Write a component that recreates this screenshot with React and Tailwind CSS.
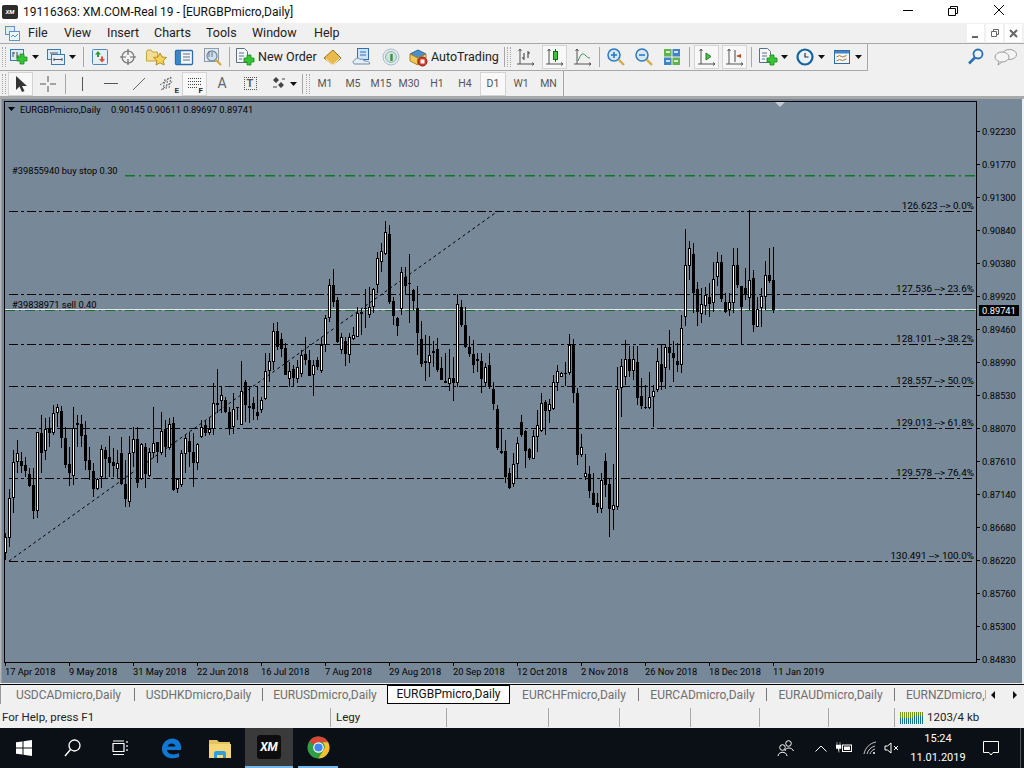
const uiFont = { fontFamily: 'Roboto, "Noto Sans", sans-serif' };

// candles read off the chart: [high, bodyTop, bodyBottom, low, white], offset is the crop origin
const segA = [
  [700,712,760,780,1],[568,595,715,740,1],[450,485,595,640,1],[420,460,485,520,1],[455,484,497,520,0],[470,495,512,530,0],
  [505,522,558,560,0],[505,555,632,658,0],[395,396,632,655,1],[345,400,458,520,0],[355,388,452,480,1],[350,388,398,440,0],
  [315,340,398,405,1],[312,322,338,380,1],[318,333,415,445,0],[380,414,495,505,0],[440,492,520,558,0],[322,383,528,555,1],
  [345,370,374,440,0],[345,372,408,440,0],[362,405,483,510,0],[440,480,510,540,0],[490,513,566,590,0],[535,536,568,570,1],
  [435,448,530,565,1],[440,450,478,535,0],[408,472,488,530,0],[445,487,497,530,0],[450,488,506,535,1],[412,460,552,555,0],
  [480,552,598,622,0],[408,460,606,622,1],[380,418,460,500,1],[380,418,548,565,0],[430,433,537,540,1],[430,442,522,565,0],
  [445,455,527,530,1],[322,428,458,475,1],[425,427,455,490,0],[335,392,460,465,1],[360,388,442,470,0],[355,372,445,450,1],
  [350,370,570,572,0],[535,538,568,578,1],[450,458,556,560,1],[405,413,462,520,1],[395,423,455,500,0],[400,456,490,562,0],
  [430,432,490,510,1],[360,382,410,415,1],[360,376,398,408,0],[350,388,400,405,1],[250,308,388,405,1],[208,308,314,340,1],
  [260,286,302,340,1],[290,300,335,340,0],[320,336,388,405,0],[278,328,382,402,1],[320,320,323,360,0],[183,274,375,375,1],
  [240,246,314,365,0],[260,318,324,370,0],[290,310,326,360,0],[258,335,348,360,0],
];
const segB = [
  [590,600,630,640,1],[458,512,598,600,1],[460,484,512,545,1],[370,394,485,510,1],[365,393,440,450,0],[400,418,446,470,0],
  [430,445,525,525,0],[485,512,538,560,1],[495,508,534,562,0],[480,500,538,550,1],[450,465,522,530,1],[412,462,480,495,0],
  [450,480,527,527,0],[480,494,525,588,1],[470,480,500,510,0],[410,436,512,518,1],[345,355,436,455,1],[238,254,355,365,1],
  [208,255,305,320,0],[292,300,426,430,0],[400,412,450,462,1],[410,423,462,497,0],[400,412,466,490,1],[380,406,418,420,1],
  [322,338,410,412,1],[325,336,342,405,0],[268,325,326,385,0],[262,322,344,355,1],[265,268,320,338,1],[155,175,255,280,1],
  [130,152,185,215,1],[62,97,162,165,1],[75,102,305,312,0],[290,304,348,375,0],[350,354,378,408,0],[202,217,328,345,1],
  [200,232,258,285,0],[162,250,252,368,0],[268,270,302,330,0],[258,325,398,465,0],[362,418,492,500,0],[405,484,490,542,1],
  [408,466,488,530,1],[422,452,460,500,1],[415,448,510,515,0],[470,504,540,540,0],[460,542,550,550,0],[448,535,553,572,1],
  [470,535,548,602,0],[283,313,548,560,1],[300,322,374,380,0],[322,376,442,445,0],[408,442,462,470,0],[420,462,496,520,0],
  [458,478,482,515,0],[460,484,538,580,0],[490,500,550,560,1],[458,495,562,566,0],[545,566,612,630,0],[615,627,744,750,0],
];
const segC = [
  [324,393,399,402,0],[360,393,471,489,0],[444,459,504,507,0],[399,432,492,501,1],[351,369,432,474,1],
  [285,306,345,352,0],[330,333,392,445,0],[385,388,413,420,0],[330,348,416,416,1],[270,316,350,395,1],[220,250,332,335,1],
  [240,246,272,345,0],[238,253,272,308,1],[165,187,268,270,1],[135,154,188,212,1],[155,160,172,172,1],[125,158,160,198,0],
  [42,75,160,165,1],[58,75,220,250,0],[205,220,404,434,0],[343,382,404,412,1],[402,460,470,480,1],[438,463,512,535,0],
  [458,518,554,556,0],[520,550,560,578,0],[458,480,566,578,1],[400,423,494,530,0],[475,492,566,650,0],[432,556,570,630,1],
  [140,208,560,570,1],[118,138,204,290,1],[60,118,170,195,1],[78,118,152,172,0],[78,118,152,180,1],[78,126,234,255,0],
  [175,228,258,268,0],[195,262,264,266,0],[155,232,264,268,1],[195,212,230,322,1],[85,122,210,215,1],[72,132,186,210,0],
  [72,82,145,208,1],[30,82,100,150,0],[62,100,114,185,0],[68,124,136,155,0],[-15,25,136,158,1],
];
const segD = [
  [88,195,350,378,1],[124,145,197,240,1],[130,162,278,340,0],[245,268,335,378,0],[265,313,343,370,1],[262,286,318,345,1],
  [250,292,312,352,0],[186,238,310,335,1],[157,187,230,258,1],[165,187,296,305,0],[280,306,336,340,0],[280,306,330,348,1],
  [145,196,310,340,1],[145,196,255,265,0],[258,258,320,433,0],[205,265,285,300,0],[30,240,295,330,1],[210,235,375,395,0],
  [292,328,380,382,1],[265,288,325,380,1],[183,226,290,330,1],[145,226,243,248,0],[142,240,330,338,0],
];
const place = (seg, y0) => seg.map(([h, t, b, l, w]) => [y0 + h / 3, y0 + t / 3, y0 + b / 3, y0 + l / 3, w].map(Math.round));
const candles = [...place(segA, 300), ...place(segB, 200), ...place(segC, 320), ...place(segD, 200)];

const prices = [
  ["0.92230", 131], ["0.91770", 164], ["0.91300", 197], ["0.90840", 230], ["0.90380", 263], ["0.89920", 296],
  ["0.89460", 329], ["0.88990", 362], ["0.88530", 395], ["0.88070", 428], ["0.87610", 461], ["0.87140", 494],
  ["0.86680", 527], ["0.86220", 560], ["0.85760", 593], ["0.85300", 626], ["0.84830", 659],
];
const dates = [
  "17 Apr 2018", "9 May 2018", "31 May 2018", "22 Jun 2018", "16 Jul 2018", "7 Aug 2018", "29 Aug 2018",
  "20 Sep 2018", "12 Oct 2018", "2 Nov 2018", "26 Nov 2018", "18 Dec 2018", "11 Jan 2019",
];
const levels = [
  ["126.623 --> 0.0%", 211], ["127.536 --> 23.6%", 294], ["128.101 --> 38.2%", 344], ["128.557 --> 50.0%", 386],
  ["129.013 --> 61.8%", 428], ["129.578 --> 76.4%", 478], ["130.491 --> 100.0%", 561],
];

const Chart = () => (
  <div className="h-[585px] bg-[#778899]">
    <svg viewBox="0 98 1024 585" className="block w-[1024px] h-[585px] text-[9.3px]" style={uiFont}>
      <rect x="0" y="98" width="1.5" height="585" fill="#b4b4b4" />
      <rect x="1022" y="98" width="2" height="585" fill="#f0f0f0" />
      <rect x="0" y="98" width="1024" height="1" fill="#a8a8a8" />
      <g shapeRendering="crispEdges">
        {levels.map(([, y]) => (
          <line key={y} x1="9" x2="975" y1={y + 0.5} y2={y + 0.5} stroke="#000" strokeDasharray="9 3 3 3" />
        ))}
      </g>
      <line x1="125" x2="975" y1="175.7" y2="175.7" stroke="#0c7a22" strokeWidth="1.4" strokeDasharray="10 4 2 4" />
      <line x1="9" y1="561" x2="498" y2="211" stroke="#000" strokeDasharray="3 3" />
      <g shapeRendering="crispEdges">
        <rect x="5" y="309" width="971" height="1" fill="#e4e8ec" />
        <line x1="5" x2="975" y1="310.5" y2="310.5" stroke="#1a6a28" strokeDasharray="10 4 2 4" />
        {candles.map(([h, t, b, l, w], i) => {
          const x = 5 + 4 * i;
          return (
            <g key={i}>
              <rect x={x} y={h} width="1" height={Math.max(l - h, 1)} fill="#000" />
              <rect x={x - 1} y={t} width="3" height={Math.max(b - t, 1)} fill="#000" />
              {w === 1 && b - t > 2 && <rect x={x} y={t + 1} width="1" height={b - t - 2} fill="#fff" />}
            </g>
          );
        })}
        <rect x="4.5" y="101.5" width="972" height="561" fill="none" stroke="#000" />
        {prices.map(([, y]) => (
          <rect key={y} x="977" y={y} width="3" height="1" fill="#000" />
        ))}
        {dates.map((d, i) => (
          <rect key={d} x={5 + 64 * i} y="663" width="1" height="3" fill="#000" />
        ))}
      </g>
      <polygon points="775,102 785,102 780,107" fill="#c8ccd2" />
      <polygon points="8,107 15,107 11.5,111" fill="#000" />
      <text x="20" y="113">EURGBPmicro,Daily</text>
      <text x="111" y="113">0.90145 0.90611 0.89697 0.89741</text>
      <text x="12" y="174">#39855940 buy stop 0.30</text>
      <text x="12" y="308">#39838971 sell 0.40</text>
      {levels.map(([t, y]) => (
        <text key={t} x="974" y={y - 2} textAnchor="end" className="text-[9.9px]">{t}</text>
      ))}
      {prices.map(([p, y]) => (
        <text key={p} x="982" y={y + 4}>{p}</text>
      ))}
      <rect x="979" y="305" width="40" height="11" fill="#000" />
      <text x="982" y="314" fill="#fff">0.89741</text>
      {dates.map((d, i) => (
        <text key={d} x={5 + 64 * i} y="675">{d}</text>
      ))}
    </svg>
  </div>
);

const Caret = () => (
  <svg width="7" height="4" viewBox="0 0 7 4"><polygon points="0,0 7,0 3.5,4" fill="#111" /></svg>
);

const Sep = ({ className = "" }) => <div className={`w-px h-[20px] shrink-0 bg-[#a8a8a8] ${className}`} />;

const Grip = ({ className = "" }) => (
  <div className={`w-[4px] h-[20px] shrink-0 border-x border-dotted border-[#a8a8a8] ${className}`} />
);

const Tool = ({ children, className = "" }) => (
  <div className={`w-[22px] h-[22px] flex items-center justify-center shrink-0 ${className}`}>{children}</div>
);

const ActiveTool = ({ children, className = "" }) => (
  <div className={`w-[25px] h-[24px] bg-[#f8f8f8] border border-[#d4d4d4] flex items-center justify-center shrink-0 ${className}`}>
    {children}
  </div>
);

const CaretSlot = ({ className = "" }) => (
  <div className={`w-[10px] h-[22px] flex items-center justify-center shrink-0 ${className}`}><Caret /></div>
);

const Plus = ({ x = 9, y = 8 }) => (
  <path
    d={`M${x + 3} ${y}h4v3h3v4h-3v3h-4v-3h-3v-4h3z`}
    fill="#35c435"
    stroke="#158a15"
    strokeWidth="0.8"
  />
);

const Ic = ({ children, w = 20, h = 20 }) => (
  <svg width={w} height={h} viewBox={`0 0 ${w} ${h}`} fill="none">{children}</svg>
);

const NewChartIcon = () => (
  <Ic>
    <rect x="1.5" y="2.5" width="13" height="11" fill="#dcebf8" stroke="#3f78b0" />
    <path d="M4 5v5M4 6h2M8 5v6M8 9h2" stroke="#444" />
    <Plus x={8} y={7} />
  </Ic>
);
const ProfilesIcon = () => (
  <Ic>
    <rect x="1.5" y="2.5" width="13" height="10" fill="#dcebf8" stroke="#3f78b0" />
    <rect x="5.5" y="7.5" width="13" height="10" fill="#e8f1fa" stroke="#3f78b0" />
    <path d="M8 12.5h8M8 11v3M16 11v3M4 6h8" stroke="#555" />
  </Ic>
);
const WatchIcon = () => (
  <Ic>
    <rect x="2.5" y="2.5" width="15" height="15" rx="1" fill="#e4eff9" stroke="#4d86bd" />
    <path d="M8 4l3 3.5H9V10H7V7.5H5z" fill="#2aa12a" />
    <path d="M12 15.5l-3-3.5h2V9.5h2V12h2z" fill="#d9502e" />
  </Ic>
);
const TargetIcon = () => (
  <Ic>
    <circle cx="10" cy="10" r="6" stroke="#777" strokeWidth="1.2" />
    <path d="M10 2v6M10 12v6M2 10h6M12 10h6" stroke="#666" strokeWidth="1.2" />
  </Ic>
);
const FolderStarIcon = () => (
  <Ic w={22}>
    <path d="M1.5 5V14h11V5h-5l-1.500-2H2.500z" fill="#f6dc8e" stroke="#c9a23c" />
    <path d="M15 6l2 4 4.500.5-3.300 3 .9 4.500L15 15.800 11 18l.9-4.500-3.300-3L13 10z" fill="#f4d35a" stroke="#b58d1e" />
  </Ic>
);
const NavigatorIcon = () => (
  <Ic>
    <rect x="1.500" y="3.500" width="17" height="14" rx="1" fill="#f4f8fc" stroke="#2c6cae" strokeWidth="1.300" />
    <rect x="2" y="4" width="5" height="13" fill="#3f85c6" />
    <path d="M9 7h7M9 10h7M9 13h7" stroke="#5a6d80" />
  </Ic>
);
const TesterIcon = () => (
  <Ic>
    <rect x="1.500" y="1.500" width="14" height="13" fill="#e3e9f0" stroke="#8b9bb0" />
    <circle cx="9" cy="9" r="5" fill="#cfe0ef" stroke="#7e8ea3" strokeWidth="1.300" />
    <path d="M6 4v6M9 5v5" stroke="#6b7888" />
    <path d="M13 13l5 5" stroke="#d7a93a" strokeWidth="2.200" />
  </Ic>
);
const OrderIcon = () => (
  <Ic w={22} h={22}>
    <path d="M2.500 2.500h8l3 3v11h-11z" fill="#f4f6f8" stroke="#59708a" />
    <path d="M5 7h5M5 10h5M5 13h3" stroke="#59708a" />
    <Plus x={10} y={9} />
  </Ic>
);
const BookIcon = () => (
  <Ic w={20}>
    <path d="M1 11l9-8 8 8-8 7z" fill="#e9b949" stroke="#9b7420" />
    <path d="M3 12l7 6 7-7" stroke="#fff6d8" />
  </Ic>
);
const CloudDocIcon = () => (
  <Ic>
    <rect x="5.500" y="1.500" width="11" height="11" fill="#cfe3f5" stroke="#2c72b8" />
    <path d="M8 5h6M8 8h6" stroke="#2c72b8" />
    <path d="M3 17c-2.500 0-2.500-3.500 0-4 .5-2 4-2.500 5-.5 2-1 4 0 4 1.500 3 0 6 .5 5.500 3z" fill="#e6eef6" stroke="#6e8bab" />
  </Ic>
);
const SignalIcon = () => (
  <Ic>
    <circle cx="10" cy="10" r="8" fill="#e6eef2" stroke="#a9bcc8" />
    <circle cx="10" cy="10" r="5.500" fill="#cfe3dc" stroke="#8fb5ac" />
    <path d="M10.500 7v7" stroke="#2f9a3c" strokeWidth="2.400" />
  </Ic>
);
const AutoIcon = () => (
  <Ic w={22}>
    <path d="M3 7l8-4 8 4-8 4z" fill="#4a90c9" stroke="#2c6496" />
    <path d="M3 7v7l8 4V11z" fill="#f0c85a" stroke="#a8851f" />
    <path d="M19 7v4l-8 7V11z" fill="#e9dba0" stroke="#a8851f" />
    <circle cx="15.500" cy="14.500" r="4.500" fill="#d83a26" stroke="#8e1f12" />
    <rect x="13.500" y="12.500" width="4" height="4" fill="#fff" />
  </Ic>
);
const Axes = ({ children }) => (
  <Ic>
    <path d="M4 2v15M1 17h17M4 2l-1.500 2M4 2l1.500 2M18 17l-2-1.500M18 17l-2 1.500" stroke="#555" />
    {children}
  </Ic>
);
const Mag = ({ plus }) => (
  <Ic>
    <circle cx="8" cy="8" r="6" fill="#d6e8f7" stroke="#2b78c2" strokeWidth="1.500" />
    <path d="M5 8h6" stroke="#2b78c2" strokeWidth="1.600" />
    {plus && <path d="M8 5v6" stroke="#2b78c2" strokeWidth="1.600" />}
    <path d="M12.500 12.500l5.500 5.500" stroke="#d4ac45" strokeWidth="2.400" />
  </Ic>
);
const TileIcon = () => (
  <Ic>
    <rect x="2" y="2" width="7.500" height="7.500" fill="#62b34c" />
    <rect x="10.500" y="2" width="7.500" height="7.500" fill="#3f85c6" />
    <rect x="2" y="10.500" width="7.500" height="7.500" fill="#3f85c6" />
    <rect x="10.500" y="10.500" width="7.500" height="7.500" fill="#62b34c" />
    <path d="M4 5h4M12 5h4M4 14h4M12 14h4" stroke="#fff" strokeWidth="1.500" />
  </Ic>
);
const ClockIcon = () => (
  <Ic w={18} h={18}>
    <circle cx="9" cy="9" r="7.500" fill="#e9f1f8" stroke="#14639f" strokeWidth="2.200" />
    <path d="M9 5v4h3.500" stroke="#333" strokeWidth="1.200" />
  </Ic>
);
const TemplateIcon = () => (
  <Ic w={18} h={18}>
    <rect x="1.500" y="2.500" width="15" height="13" fill="#f3f7fb" stroke="#2f6ca5" />
    <rect x="2" y="3" width="14" height="2.500" fill="#3d86c9" />
    <path d="M3.500 9l3-1.500 3 1.500 4-1.500M3.500 13l3-1.500 3 1 4-1.500" stroke="#b0762c" />
  </Ic>
);
const SearchIcon = () => (
  <Ic>
    <circle cx="12" cy="7" r="4.500" fill="#eef5fb" stroke="#2c6fb5" strokeWidth="1.800" />
    <path d="M9 10.500l-6 6" stroke="#2c6fb5" strokeWidth="2.600" />
  </Ic>
);
const ChatIcon = () => (
  <Ic w={24} h={20}>
    <ellipse cx="15.500" cy="7.500" rx="7" ry="5" fill="#f4f4f4" stroke="#9a9a9a" />
    <ellipse cx="8" cy="10" rx="7" ry="5" fill="#f4f4f4" stroke="#9a9a9a" />
    <path d="M5 14.500l-1 3.500 4-3" fill="#f4f4f4" stroke="#9a9a9a" />
  </Ic>
);

const TitleBar = () => (
  <div className="h-[23px] bg-white flex items-center text-[12px] text-[#111]">
    <div className="ml-[2px] w-[16px] h-[14px] rounded-[2px] bg-[#2c2c2c] flex items-center justify-center text-[6px] font-bold italic text-white">XM</div>
    <div className="ml-[5px]">19116363: XM.COM-Real 19 - [EURGBPmicro,Daily]</div>
    <svg width="150" height="23" viewBox="0 0 150 23" fill="none" className="ml-auto">
      <path d="M29 10.500h10" stroke="#000" />
      <path d="M74.500 8.500h7v7h-7zM76.500 8.500v-2h7v7h-2" stroke="#000" />
      <path d="M120 5l10 10M130 5l-10 10" stroke="#000" />
    </svg>
  </div>
);

const MenuBar = () => (
  <div className="h-[21px] bg-[#f0f0f0] border-b border-[#a8a8a8] flex items-center text-[12.5px] text-[#222]">
    <div className="ml-[5px] mr-[8px]">
      <svg width="15" height="15" viewBox="0 0 15 15" fill="none">
        <rect x="0.500" y="0.500" width="9" height="8" fill="#dcebf8" stroke="#5d93c6" />
        <rect x="4.500" y="5.500" width="10" height="9" fill="#eef5fb" stroke="#5d93c6" />
        <path d="M6 11l2-2 2 2 3-3" stroke="#5d93c6" />
      </svg>
    </div>
    <span className="w-[36px]">File</span>
    <span className="w-[43px]">View</span>
    <span className="w-[47px]">Insert</span>
    <span className="w-[52px]">Charts</span>
    <span className="w-[46px]">Tools</span>
    <span className="w-[62px]">Window</span>
    <span>Help</span>
    <div className="ml-auto mr-[2px] flex gap-[2px] h-[18px]">
      <div className="w-[17px] bg-white flex items-center justify-center">
        <svg width="9" height="9"><rect x="1" y="7" width="6" height="2" fill="#666" /></svg>
      </div>
      <div className="w-[17px] bg-white flex items-center justify-center">
        <svg width="10" height="10" fill="none"><path d="M1.500 3.500h5v5h-5zM3.500 3V1.500h5v5H7" stroke="#666" /></svg>
      </div>
      <div className="w-[17px] bg-white flex items-center justify-center">
        <svg width="9" height="9" fill="none"><path d="M1 1l7 7M8 1l-7 7" stroke="#666" strokeWidth="2" /></svg>
      </div>
    </div>
  </div>
);

const ToolbarOne = () => (
  <div className="h-[27px] bg-[#f0f0f0] flex items-stretch">
    <div className="w-[868px] border-b border-r border-[#a8a8a8] flex items-center">
      <Grip className="ml-[2px]" />
      <Tool className="ml-[2px]"><NewChartIcon /></Tool>
      <CaretSlot />
      <Tool className="ml-[5px]"><ProfilesIcon /></Tool>
      <CaretSlot />
      <Sep className="ml-[6px]" />
      <Tool className="ml-[5px]"><WatchIcon /></Tool>
      <Tool className="ml-[6px]"><TargetIcon /></Tool>
      <Tool className="ml-[6px]"><FolderStarIcon /></Tool>
      <Tool className="ml-[6px]"><NavigatorIcon /></Tool>
      <Tool className="ml-[7px]"><TesterIcon /></Tool>
      <Sep className="ml-[5px]" />
      <Tool className="ml-[4px]"><OrderIcon /></Tool>
      <span className="ml-[2px] w-[59px] shrink-0 text-[12.5px] text-[#222] whitespace-nowrap">New Order</span>
      <Tool className="ml-[5px]"><BookIcon /></Tool>
      <Tool className="ml-[7px]"><CloudDocIcon /></Tool>
      <Tool className="ml-[7px]"><SignalIcon /></Tool>
      <Tool className="ml-[5px]"><AutoIcon /></Tool>
      <span className="ml-[2px] w-[68px] shrink-0 text-[12.5px] text-[#222] whitespace-nowrap">AutoTrading</span>
      <Sep className="ml-[5px]" />
      <Grip className="ml-[2px]" />
      <Tool className="ml-[4px]">
        <Axes><path d="M8 6v7M8 11H6M12 4v7M12 6h2" stroke="#333" /></Axes>
      </Tool>
      <ActiveTool className="ml-[5px]">
        <Axes><rect x="8.500" y="4.500" width="4" height="8" fill="#3cc23c" stroke="#176b17" /><path d="M10.500 2v2.500M10.500 12.500V15" stroke="#176b17" /></Axes>
      </ActiveTool>
      <Tool className="ml-[5px]">
        <Axes><path d="M5 14c3-8 5-8 7-6s3 3 5 3" stroke="#3a8f5a" /></Axes>
      </Tool>
      <Sep className="ml-[5px]" />
      <Tool className="ml-[5px]"><Mag plus /></Tool>
      <Tool className="ml-[6px]"><Mag /></Tool>
      <Tool className="ml-[6px]"><TileIcon /></Tool>
      <Sep className="ml-[6px]" />
      <ActiveTool className="ml-[4px]">
        <Axes><path d="M9 6l5 3.500-5 3.500z" fill="#4bbf4b" stroke="#238023" /></Axes>
      </ActiveTool>
      <ActiveTool className="ml-[3px]">
        <Axes><path d="M10 3v12" stroke="#444" /><path d="M11 9l5-2v4z" fill="#c8481f" /></Axes>
      </ActiveTool>
      <Sep className="ml-[4px]" />
      <Tool className="ml-[5px]"><OrderIcon /></Tool>
      <CaretSlot />
      <Tool className="ml-[5px]"><ClockIcon /></Tool>
      <CaretSlot />
      <Tool className="ml-[5px]"><TemplateIcon /></Tool>
      <CaretSlot />
    </div>
    <div className="ml-auto flex items-center gap-[8px] pr-[6px] pb-[2px]">
      <SearchIcon />
      <ChatIcon />
    </div>
  </div>
);

const ToolbarTwo = () => (
  <div className="h-[27px] bg-[#f0f0f0] border-b-2 border-[#a8a8a8] flex items-stretch">
    <div className="w-[564px] border-r border-[#a8a8a8] flex items-center text-[#555]">
      <Grip className="ml-[2px]" />
      <ActiveTool className="ml-[2px]">
        <svg width="14" height="18" viewBox="0 0 14 18"><path d="M2 1v14l3.500-3.500L8 17l2.500-1-2.500-5h5z" fill="#333" /></svg>
      </ActiveTool>
      <Tool className="ml-[4px]">
        <svg width="16" height="16" fill="none"><path d="M8 0v6M8 10v6M0 8h6M10 8h6" stroke="#555" /></svg>
      </Tool>
      <Sep className="ml-[6px]" />
      <Tool className="ml-[5px]"><svg width="3" height="14"><rect x="1" width="1" height="14" fill="#555" /></svg></Tool>
      <Tool className="ml-[7px]"><svg width="14" height="3"><rect y="1" width="14" height="1" fill="#555" /></svg></Tool>
      <Tool className="ml-[6px]"><svg width="16" height="16" fill="none"><path d="M2 14L14 2" stroke="#666" /></svg></Tool>
      <Tool className="ml-[6px] relative">
        <svg width="16" height="16" fill="none"><path d="M1 9L12 1M2 14L14 5M6 3l-2 11M9 2l-2 11M12 1l-2 11" stroke="#666" strokeDasharray="2 1" /></svg>
        <span className="absolute right-[-1px] bottom-[0px] text-[8px] leading-none font-bold text-[#333]">E</span>
      </Tool>
      <ActiveTool className="ml-[4px] relative">
        <svg width="16" height="14" fill="none"><path d="M1 1.500h14M1 4.500h14M1 7.500h14M1 10.500h9" stroke="#444" strokeDasharray="1 1" /></svg>
        <span className="absolute right-[3px] bottom-[0px] text-[8px] leading-none font-bold text-[#222]">F</span>
      </ActiveTool>
      <Tool className="ml-[4px]"><span className="text-[14px] text-[#666]">A</span></Tool>
      <Tool className="ml-[6px]">
        <div className="w-[13px] h-[13px] border border-dotted border-[#555] flex items-center justify-center text-[11px] font-semibold leading-none">T</div>
      </Tool>
      <Tool className="ml-[7px]">
        <svg width="14" height="14"><path d="M4 0l3 3-3 3-3-3zM9 5l3 3-3 3-3-3z" fill="#444" /><path d="M1 10h4M10 2h3" stroke="#444" /></svg>
      </Tool>
      <CaretSlot className="ml-[-2px]" />
      <Sep className="ml-[4px]" />
      <Grip className="ml-[3px]" />
      <div className="flex items-center text-[10.5px] text-[#555] ml-[1px]">
        <span className="w-[28px] text-center">M1</span>
        <span className="w-[28px] text-center">M5</span>
        <span className="w-[28px] text-center">M15</span>
        <span className="w-[28px] text-center">M30</span>
        <span className="w-[28px] text-center">H1</span>
        <span className="w-[28px] text-center">H4</span>
        <span className="w-[26px] h-[24px] ml-[1px] leading-[22px] text-center bg-[#f8f8f8] border border-[#d4d4d4]">D1</span>
        <span className="w-[30px] text-center">W1</span>
        <span className="w-[25px] text-center">MN</span>
      </div>
    </div>
  </div>
);

const Tab = ({ label, className, sep = true }) => (
  <div className={`flex items-center justify-between shrink-0 h-full ${className}`}>
    <span className="flex-1 text-center whitespace-nowrap">{label}</span>
    {sep && <span className="w-px h-[13px] bg-[#777]" />}
  </div>
);

const TabBar = () => (
  <div className="h-[22px] bg-[#f0f0f0] border-t border-[#eeeeee]">
    <div className="h-[21px] border-t border-black flex items-start text-[12px] text-[#6f6f6f]">
      <div className="h-[19px] flex items-center">
        <Tab label="USDCADmicro,Daily" className="w-[135px] border-l border-[#999] pl-[2px]" />
        <Tab label="USDHKDmicro,Daily" className="w-[128px]" />
        <Tab label="EURUSDmicro,Daily" className="w-[124px]" sep={false} />
        <div className="w-[123px] h-[19px] mt-[-1px] bg-white border border-t-black border-black flex items-center justify-center text-[#111] whitespace-nowrap">
          EURGBPmicro,Daily
        </div>
        <Tab label="EURCHFmicro,Daily" className="w-[129px]" />
        <Tab label="EURCADmicro,Daily" className="w-[128px]" />
        <Tab label="EURAUDmicro,Daily" className="w-[128px]" />
        <div className="w-[80px] ml-[11px] overflow-hidden whitespace-nowrap">EURNZDmicro,Daily</div>
        <svg width="32" height="10" viewBox="0 0 32 10" className="ml-[4px]">
          <polygon points="5,1 5,9 1,5" fill="#111" />
          <polygon points="23,1 23,9 27,5" fill="#111" />
        </svg>
      </div>
    </div>
  </div>
);

const StatusCell = ({ className, children }) => (
  <div className={`h-[19px] mt-[3px] border-r border-[#a8a8a8] shrink-0 flex items-center ${className}`}>{children}</div>
);

const StatusBar = () => (
  <div className="h-[23px] bg-[#f0f0f0] flex items-start text-[11.5px] text-[#222]">
    <StatusCell className="w-[331px] pl-[2px]">For Help, press F1</StatusCell>
    <StatusCell className="w-[116px] pl-[5px]">Legy</StatusCell>
    <StatusCell className="w-[102px]" />
    <StatusCell className="w-[71px]" />
    <StatusCell className="w-[71px]" />
    <StatusCell className="w-[69px]" />
    <StatusCell className="w-[69px]" />
    <StatusCell className="w-[66px]" />
    <div className="h-[19px] mt-[3px] pl-[5px] flex items-center gap-[4px]">
      <svg width="23" height="12" viewBox="0 0 23 12" shapeRendering="crispEdges">
        {[...Array(12)].map((_, i) => (
          <g key={i}>
            <rect x={i * 2} y="0" width="1" height="6" fill={i < 7 ? "#7a9a1e" : "#6c8a1a"} />
            <rect x={i * 2} y={i < 7 ? 6 : 4} width="1" height={i < 7 ? 6 : 8} fill="#1b6f8f" />
          </g>
        ))}
      </svg>
      <span>1203/4 kb</span>
    </div>
  </div>
);

const TaskIcon = ({ className = "", children }) => (
  <div className={`h-[40px] flex items-center justify-center shrink-0 ${className}`}>{children}</div>
);

const Taskbar = () => (
  <div className="h-[40px] bg-[#0b1016] flex items-center text-white">
    <TaskIcon className="w-[48px]">
      <svg width="16" height="16" viewBox="0 0 16 16"><path d="M0 2.300L6.500 1.400V7.500H0zM7.500 1.200L16 0V7.500H7.500zM0 8.500H6.500V14.600L0 13.700zM7.500 8.500H16V16L7.500 14.800z" fill="#fff" /></svg>
    </TaskIcon>
    <TaskIcon className="w-[48px]">
      <svg width="17" height="18" viewBox="0 0 17 18" fill="none"><circle cx="10.500" cy="6.500" r="5.500" stroke="#fff" strokeWidth="1.300" /><path d="M6.500 10.500L1 17" stroke="#fff" strokeWidth="1.400" /></svg>
    </TaskIcon>
    <TaskIcon className="w-[48px]">
      <svg width="17" height="16" viewBox="0 0 17 16" fill="none"><path d="M1 3.500h11v8H1zM1 1h11M1 14.500h11M15 1v2M15 5v2M15 9v2" stroke="#fff" strokeWidth="1.200" /></svg>
    </TaskIcon>
    <TaskIcon className="w-[55px]">
      <svg width="21" height="21" viewBox="0 0 21 21" fill="none"><path d="M20 12H6c.3 4 6 6 12 3v4c-7 3-16 1-17-7C.5 5 6 .5 11.500.500 17 .5 21 5 20 12zM6.500 8.500h8C14 4.500 7.500 4.500 6.500 8.500z" fill="#0f78d4" /></svg>
    </TaskIcon>
    <TaskIcon className="w-[42px]">
      <svg width="22" height="19" viewBox="0 0 22 19"><path d="M0 1h8l2 2h11v3H0z" fill="#e4c262" /><path d="M0 5h22v14H0z" fill="#f6d677" /><path d="M5 19v-5c0-1 1-2 2-2h8c1 0 2 1 2 2v5h-3v-3H8v3z" fill="#2f9ede" /></svg>
    </TaskIcon>
    <div className="w-[4px]" />
    <TaskIcon className="w-[48px] bg-[#3a3a3a] border-b-[2px] border-[#76b9ed]">
      <div className="w-[24px] h-[24px] rounded-[3px] bg-[#0d0d0d] flex items-center justify-center text-[12px] font-bold italic leading-none text-white">XM</div>
    </TaskIcon>
    <div className="w-[5px]" />
    <TaskIcon className="w-[40px] border-b-[2px] border-[#76b9ed]">
      <svg width="23" height="23" viewBox="0 0 24 24">
        <circle cx="12" cy="12" r="11.500" fill="#2f9e44" />
        <path d="M12 .5A11.500 11.500 0 0 1 22 6.500H12a5.500 5.500 0 0 0-5 3L2.500 5.500A11.500 11.500 0 0 1 12 .5z" fill="#db4437" />
        <path d="M22 6.500A11.500 11.500 0 0 1 12 23.500l5-8.500a5.500 5.500 0 0 0-1-8.500z" fill="#fbc02d" />
        <circle cx="12" cy="12" r="5.500" fill="#fff" />
        <circle cx="12" cy="12" r="4.300" fill="#4285f4" />
      </svg>
    </TaskIcon>
    <div className="ml-auto flex items-center h-full">
      <svg width="18" height="18" viewBox="0 0 18 18" fill="none" className="mr-[20px]" stroke="#fff">
        <circle cx="11.500" cy="4.500" r="2.800" /><path d="M8 12c.5-4 7-4 8.500 0" />
        <circle cx="5.500" cy="8.500" r="2.800" /><path d="M1 17c.5-5 8.500-5 9 0" />
      </svg>
      <svg width="12" height="7" viewBox="0 0 12 7" fill="none" className="mr-[9px]"><path d="M.5 6.500L6 1l5.500 5.500" stroke="#fff" /></svg>
      <svg width="16" height="12" viewBox="0 0 16 12" className="mr-[11px]">
        <path d="M0 3h5v3.500H0zM1 0v3M4 0v3M2 6.500h1v4" fill="#fff" stroke="#fff" strokeWidth="0.500" />
        <rect x="6.500" y="3" width="9" height="6.500" fill="none" stroke="#fff" /><rect x="8" y="4.500" width="6" height="3.500" fill="#fff" />
      </svg>
      <svg width="16" height="14" viewBox="0 0 16 14" fill="none" stroke="#c8c8c8" className="mr-[5px]">
        <path d="M1 13C2 7 7 2 13 1M4 13c1-4 4-7 8-8M7 13c.5-2 2-4 5-5" /><circle cx="11" cy="12" r="1" fill="#fff" stroke="none" />
      </svg>
      <svg width="16" height="12" viewBox="0 0 16 12" fill="none" stroke="#fff">
        <path d="M1 4h2.500L7 1v10L3.500 8H1zM10 4l4 4M14 4l-4 4" />
      </svg>
      <div className="w-[72px] ml-[2px] text-center text-[11px] leading-[19px]">
        <div>15:24</div>
        <div>11.01.2019</div>
      </div>
      <svg width="16" height="16" viewBox="0 0 16 16" fill="none" stroke="#fff" className="ml-[9px] mr-[21px]">
        <path d="M.5 1.500h15v11H10l-2 2.500-2-2.500H.5z" />
      </svg>
      <div className="w-px h-full bg-[#555] mr-[3px]" />
    </div>
  </div>
);

const App = () => (
  <div className="w-[1024px] h-[768px] overflow-hidden flex flex-col bg-[#f0f0f0]" style={uiFont}>
    <TitleBar />
    <MenuBar />
    <ToolbarOne />
    <ToolbarTwo />
    <Chart />
    <TabBar />
    <StatusBar />
    <Taskbar />
  </div>
);

export default App;
